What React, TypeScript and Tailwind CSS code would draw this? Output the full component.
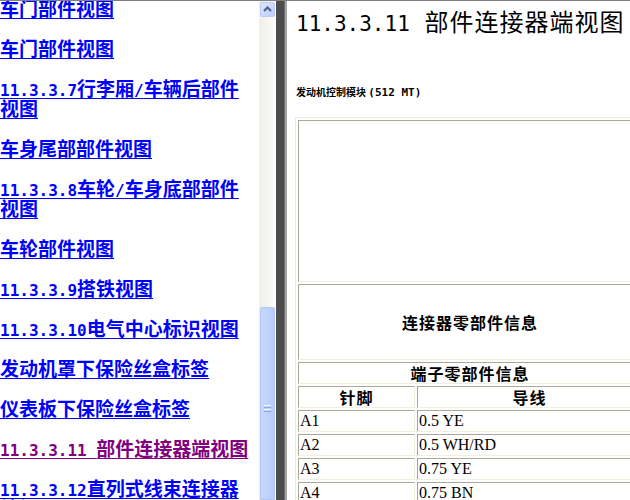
import { Fragment } from "react";

// ---------- text helpers ----------
// split a string into ascii runs and cjk runs so each gets its own face
const isAscii = (s: string) => /^[\x20-\x7e]+$/.test(s);

function Mixed({ text, ascii }: { text: string; ascii: string }) {
  const parts = text.split(/([\x20-\x7e]+)/).filter(Boolean);
  return (
    <>
      {parts.map((p, i) =>
        isAscii(p) ? (
          <span key={i} className={ascii}>
            {p}
          </span>
        ) : (
          <Fragment key={i}>{p}</Fragment>
        )
      )}
    </>
  );
}

const links: { label: string; visited?: boolean }[] = [
  { label: "车门部件视图" },
  { label: "车门部件视图" },
  { label: "11.3.3.7行李厢/车辆后部件视图" },
  { label: "车身尾部部件视图" },
  { label: "11.3.3.8车轮/车身底部部件视图" },
  { label: "车轮部件视图" },
  { label: "11.3.3.9搭铁视图" },
  { label: "11.3.3.10电气中心标识视图" },
  { label: "发动机罩下保险丝盒标签" },
  { label: "仪表板下保险丝盒标签" },
  { label: "11.3.3.11 部件连接器端视图", visited: true },
  { label: "11.3.3.12直列式线束连接器端视图" },
];

const pins = [
  { pin: "A1", wire: "0.5 YE" },
  { pin: "A2", wire: "0.5 WH/RD" },
  { pin: "A3", wire: "0.75 YE" },
  { pin: "A4", wire: "0.75 BN" },
];

const cell =
  "border border-t-[#aca899] border-l-[#aca899] border-b-[#f1efe2] border-r-[#f1efe2] p-0";

// ---------- left frame ----------
function TocFrame() {
  return (
    <div className="flex w-[276px] shrink-0">
      <div className="w-[259px] overflow-hidden">
        <div className="-mt-[3px] w-[253px] font-['Noto_Sans_CJK_SC',sans-serif] text-[19px] leading-[20px] font-bold">
          {links.map((l, i) => (
            <p key={i} className="mb-[20px]">
              <a
                href="#"
                className={
                  l.visited
                    ? "text-[#800080] underline underline-offset-[2px]"
                    : "text-[#0000ff] underline underline-offset-[2px]"
                }
              >
                <Mixed
                  text={l.label}
                  ascii="font-['DejaVu_Sans_Mono',monospace] text-[16px] leading-[12px]"
                />
              </a>
            </p>
          ))}
        </div>
      </div>

      {/* xp style scrollbar */}
      <div className="flex w-[17px] flex-col bg-gradient-to-r from-[#f0efe8] to-[#fbfbf9] border-r border-white">
        <div className="ml-[1px] mt-[1px] flex h-[15px] w-[15px] items-center justify-center rounded-[2px] border border-[#b9cdf8] bg-gradient-to-br from-[#dbe6fe] to-[#bccffa]">
          <svg width="9" height="6" viewBox="0 0 9 6">
            <path d="M1 5 L4.5 1.5 L8 5" fill="none" stroke="#4d6185" strokeWidth="2" />
          </svg>
        </div>
        <div className="mt-[290px] ml-[1px] flex h-[200px] w-[15px] flex-col items-center rounded-t-[2px] border border-[#b3c7f5] bg-gradient-to-r from-[#c7d8fd] via-[#bfd2fc] to-[#b6cbf8]">
          <div className="mt-[97px] flex flex-col gap-[1px]">
            <div className="h-[1px] w-[7px] bg-[#eef3fe]" />
            <div className="h-[1px] w-[7px] bg-[#8ca7e6]" />
            <div className="h-[1px] w-[7px] bg-[#eef3fe]" />
            <div className="h-[1px] w-[7px] bg-[#8ca7e6]" />
          </div>
        </div>
      </div>
    </div>
  );
}

// ---------- right frame ----------
function ConnectorFrame() {
  return (
    <div className="flex-1 overflow-hidden bg-white pl-[8px] text-black">
      <h1 className="mt-[6px] ml-[1px] whitespace-nowrap font-['Noto_Sans_CJK_SC',sans-serif] text-[24px] leading-[28px] font-normal">
        <span className="font-['DejaVu_Sans_Mono',monospace] text-[21px] leading-[20px]">11.3.3.11 </span>
        <span className="ml-[2px] tracking-[1px]">部件连接器端视图</span>
      </h1>

      <div className="mt-[50px] ml-[1px] font-['Noto_Sans_CJK_SC',sans-serif] text-[10px] leading-[14px] font-bold">
        发动机控制模块{" "}
        <span className="font-['DejaVu_Sans_Mono',monospace] text-[11px] leading-[10px]">(512 MT)</span>
      </div>

      <table className="mt-[18px] w-[350px] table-fixed border-separate border-spacing-[2px] border border-t-[#ece9d8] border-l-[#ece9d8] border-r-[#aca899] border-b-[#aca899] font-['Noto_Sans_CJK_SC',sans-serif] text-[16px] leading-[20px]">
        <colgroup>
          <col className="w-[117px]" />
          <col />
        </colgroup>
        <tbody>
          <tr>
            <td colSpan={2} className={cell}>
              <div className="h-[160px]" />
            </td>
          </tr>
          <tr>
            <td colSpan={2} className={cell}>
              <div className="flex h-[74px] items-center justify-center font-bold tracking-[1px]">
                连接器零部件信息
              </div>
            </td>
          </tr>
          <tr>
            <td colSpan={2} className={cell}>
              <div className="h-[20px] text-center font-bold tracking-[1px]">端子零部件信息</div>
            </td>
          </tr>
          <tr>
            <td className={cell}>
              <div className="h-[20px] text-center font-bold tracking-[1px]">针脚</div>
            </td>
            <td className={cell}>
              <div className="h-[20px] text-center font-bold tracking-[1px]">导线</div>
            </td>
          </tr>
          {pins.map((p) => (
            <tr key={p.pin}>
              <td className={cell}>
                <div className="h-[20px] pl-[1px] font-['Liberation_Serif',serif]">{p.pin}</div>
              </td>
              <td className={cell}>
                <div className="h-[20px] pl-[1px] font-['Liberation_Serif',serif] whitespace-pre">
                  {p.wire}
                </div>
              </td>
            </tr>
          ))}
        </tbody>
      </table>
    </div>
  );
}

export default function App() {
  return (
    <div className="flex h-[500px] w-[630px] overflow-hidden border-t border-[#7f7f7f] bg-white">
      <TocFrame />
      {/* frame splitter */}
      <div className="flex shrink-0">
        <div className="w-[8px] bg-[#4c4c4c]" />
        <div className="w-[1px] bg-[#6b6b6b]" />
        <div className="w-[2px] bg-[#a4a4a4]" />
      </div>
      <ConnectorFrame />
    </div>
  );
}
